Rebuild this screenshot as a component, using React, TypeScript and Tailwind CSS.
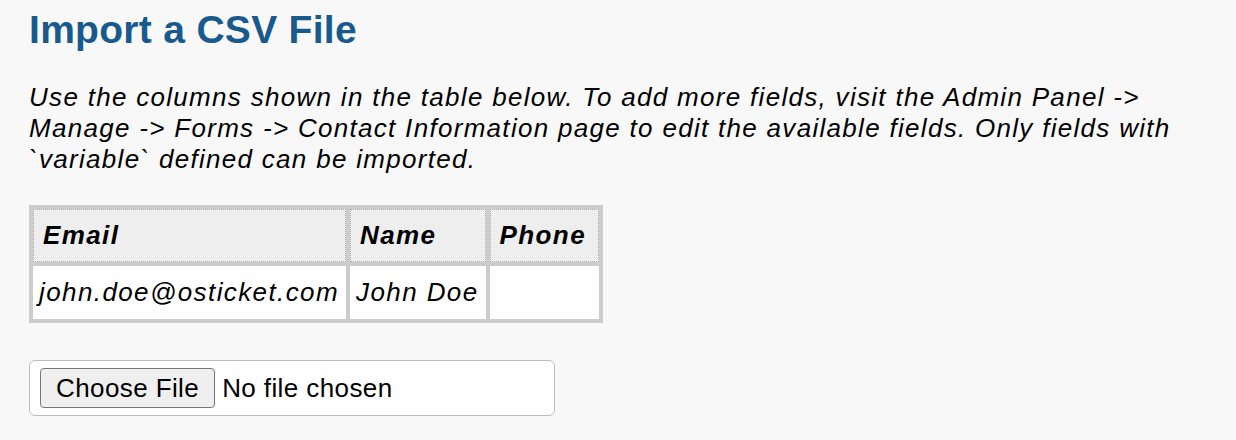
import React from 'react';

const columns = ['Email', 'Name', 'Phone'];
const sample = ['john.doe@osticket.com', 'John Doe', ''];

export default function App() {
  return (
    <div className="min-h-[440px] bg-[#f8f8f8] px-[29px] pt-[8px] font-['Liberation_Sans',Arial,sans-serif] text-black">
      <h2 className="text-[39px] leading-[44px] font-bold tracking-[0.3px] text-[#185a8e]">Import a CSV File</h2>

      <p className="mt-[30px] text-[26px] leading-[31px] italic tracking-[1.3px]">
        Use the columns shown in the table below. To add more fields, visit the Admin Panel -&gt; Manage -&gt; Forms -&gt;
        Contact Information page to edit the available fields. Only fields with `variable` defined can be imported.
      </p>

      <table className="mt-[30px] border-separate border-spacing-[4px] bg-[#cccccc] italic text-[26px] tracking-[1.4px]">
        <thead>
          <tr>
            {columns.map((c) => (
              <th key={c} className="h-[53px] border border-dotted border-[#a9a9a9] bg-[#eeeeee] pl-[9px] pr-[12px] text-left font-bold">
                {c}
              </th>
            ))}
          </tr>
        </thead>
        <tbody>
          <tr>
            {sample.map((v, i) => (
              <td key={i} className="h-[53px] bg-white pl-[6px] pr-[7px]">
                {v}
              </td>
            ))}
          </tr>
        </tbody>
      </table>

      <div className="mt-[37px] flex h-[56px] w-[526px] items-center gap-[7px] rounded-[6px] border border-[#bdbdbd] bg-white px-[10px] text-[26px] tracking-[0.4px]">
        <span className="flex h-[40px] items-center rounded-[4px] border border-[#767676] bg-[#efefef] px-[15px]">Choose File</span>
        <span>No file chosen</span>
      </div>
    </div>
  );
}
